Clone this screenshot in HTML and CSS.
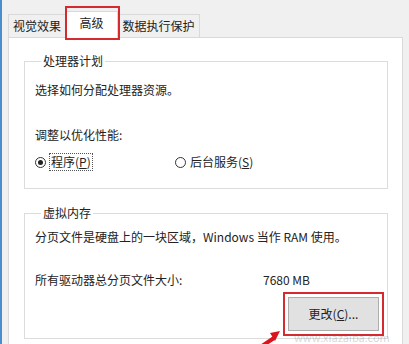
FILE: index.html
```html
<!DOCTYPE html>
<html>
<head>
<meta charset="utf-8">
<link rel="stylesheet" href="styles.css">
</head>
<body>
<div class="window">
  <div class="tabs">
    <div class="tab t1">视觉效果</div>
    <div class="tab t2 active">高级</div>
    <div class="tab t3">数据执行保护</div>
  </div>
  <div class="panel">
    <fieldset class="group g1">
      <legend>处理器计划</legend>
      <div class="line l1">选择如何分配处理器资源。</div>
      <div class="line l2">调整以优化性能:</div>
      <div class="radios">
        <div class="radio r1"><span class="dot on"></span><span class="focus">程序(<u>P</u>)</span></div>
        <div class="radio r2"><span class="dot"></span><span>后台服务(<u>S</u>)</span></div>
      </div>
    </fieldset>
    <fieldset class="group g2">
      <legend>虚拟内存</legend>
      <div class="line l3">分页文件是硬盘上的一块区域，Windows 当作 RAM 使用。</div>
      <div class="line l4"><span class="lab">所有驱动器总分页文件大小:</span><span class="val">7680 MB</span></div>
      <div class="btnrow">
        <div class="mark"><div class="btn">更改(<u>C</u>)...</div></div>
      </div>
    </fieldset>
  </div>
  <div class="wm">www.xiazaiba.com</div>
  <svg class="arrow" width="24" height="16" viewBox="0 0 24 16"><path d="M2 16 L14 8" stroke="#d9141c" stroke-width="4" fill="none"/><polygon points="10,3 20,1 15,11" fill="#d9141c"/></svg>
</div>
</body>
</html>
```
FILE: styles.css
```css
html, body {
  margin: 0;
  padding: 0;
}
body {
  width: 409px;
  height: 344px;
  overflow: hidden;
  background: #f0f0f0;
  font-family: "Noto Sans CJK SC", "Liberation Sans", sans-serif;
  font-size: 12px;
  color: #222;
}
.window {
  position: relative;
  height: 344px;
  box-sizing: border-box;
  border-left: 2px solid #4a8fcb;
  padding: 14px 6px 0 6px;
}
.tabs {
  display: flex;
  height: 23px;
  align-items: flex-end;
}
.tab {
  box-sizing: border-box;
  height: 23px;
  line-height: 21px;
  border: 1px solid #d9d9d9;
  border-bottom: none;
  background: #f0f0f0;
  text-align: center;
}
.t1 { width: 57px; border-right: none; }
.t2 { width: 53px; }
.t3 { width: 82px; border-left: none; }
.tab.active {
  position: relative;
  background: #fff;
  margin-bottom: -1px;
  line-height: 22px;
  z-index: 2;
  padding-bottom: 1px;
  height: 27px;
}
.tab.active::after {
  content: "";
  position: absolute;
  left: -1px;
  top: -6px;
  width: 55px;
  height: 34px;
  border: 2px solid #d42a30;
  box-sizing: border-box;
}
.panel {
  background: #fff;
  border: 1px solid #d9d9d9;
  height: 320px;
  box-sizing: border-box;
  padding: 15px 14px 0 15px;
}
.group {
  margin: 0;
  border: 1px solid #dcdcdc;
  padding: 0 10px 0 10px;
}
.group legend {
  padding: 0 2px;
  margin-left: 6px;
  line-height: 16px;
}
.g1 { padding-top: 13px; padding-bottom: 18px; }
.g2 {
  margin-top: 16px;
  padding-top: 8px;
  height: 134px;
  box-sizing: border-box;
}
.line { line-height: 16px; white-space: nowrap; }
.l2 { margin-top: 29px; }
.l4 { margin-top: 27px; display: flex; }
.l4 .lab { width: 228px; }
.radios {
  display: flex;
  margin-top: 11px;
  line-height: 16px;
}
.radio { display: flex; align-items: center; }
.r1 { width: 140px; }
.dot {
  width: 9px;
  height: 9px;
  border: 1px solid #333;
  border-radius: 50%;
  position: relative;
  margin-right: 4px;
}
.dot.on::after {
  content: "";
  position: absolute;
  left: 2px;
  top: 2px;
  width: 5px;
  height: 5px;
  border-radius: 50%;
  background: #222;
}
.focus {
  outline: 1px dotted #555;
  padding: 0 1px;
}
.btnrow {
  display: flex;
  justify-content: flex-end;
  margin-top: 4px;
  margin-right: -7px;
}
.mark {
  border: 2px solid #d42a30;
  padding: 3px;
}
.btn {
  width: 91px;
  height: 34px;
  box-sizing: border-box;
  background: #e1e1e1;
  border: 1px solid #adadad;
  text-align: center;
  line-height: 32px;
}
.wm {
  position: absolute;
  left: 292px;
  top: 331px;
  font-size: 11px;
  line-height: 12px;
  color: rgba(120, 120, 120, 0.3);
  pointer-events: none;
}
.arrow {
  position: absolute;
  left: 258px;
  top: 330px;
}
```
